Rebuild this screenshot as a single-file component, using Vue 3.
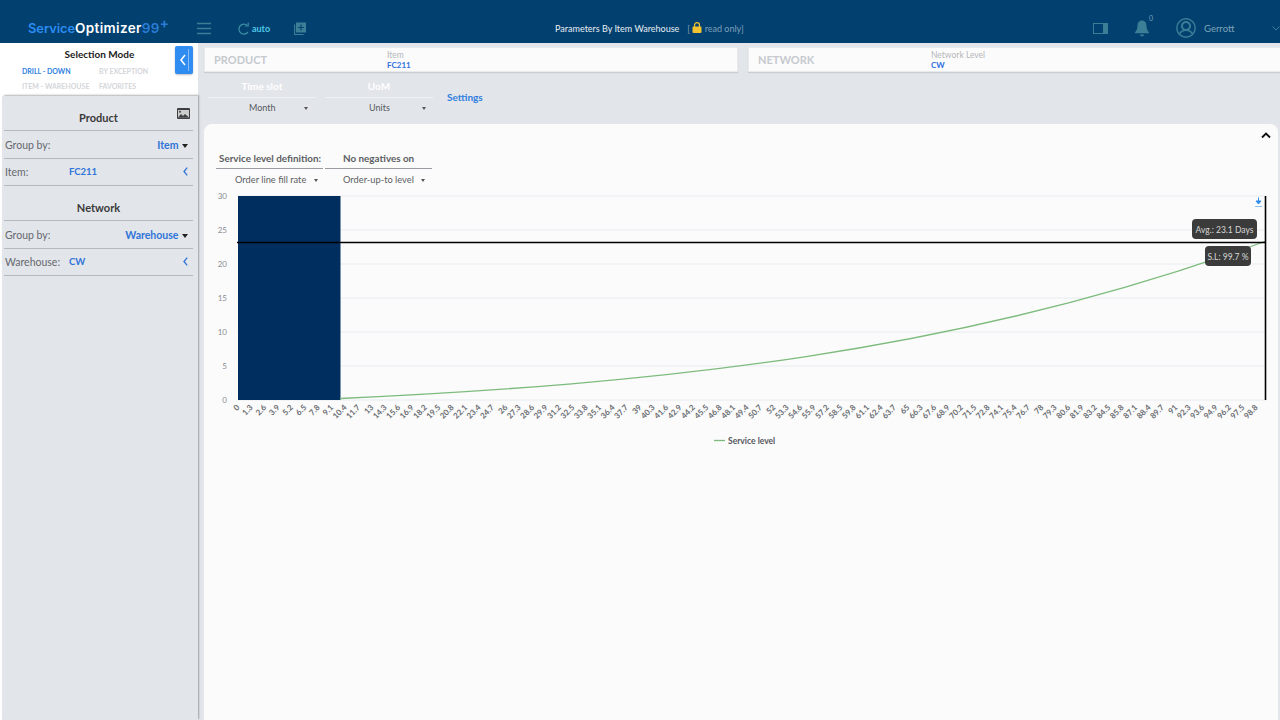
<script setup>
import { computed } from 'vue'

const yTicks = [30, 25, 20, 15, 10, 5, 0].map((v) => ({ v, y: 400 - v * 6.8 }))

// x axis runs 0 .. 98.8 in steps of 1.3
const xLabels = computed(() => {
  const list = []
  for (let i = 0; i <= 76; i++) {
    list.push({ text: String(Math.round(i * 13) / 10), x: 237 + i * 13.4 })
  }
  return list
})
</script>

<template>
  <div class="app">
    <header class="topbar">
      <div class="logo"><span class="logo-a">Service</span><span class="logo-b">Optimizer</span><span class="logo-a dim">99</span><sup class="logo-a dim">+</sup></div>
      <svg class="ico menu" width="14" height="13" viewBox="0 0 14 13"><path d="M0 1.500h14M0 6.500h14M0 11.500h14" stroke="#3b7f97" stroke-width="1.600" fill="none" /></svg>
      <svg class="ico refresh" width="12" height="13" viewBox="0 0 12 13"><path d="M10 10a5 5 0 1 1-.6-6.600" stroke="#3b8aa3" stroke-width="1.300" fill="none" /><path d="M10.200 0.600v3.400H7" stroke="#3b8aa3" stroke-width="1.200" fill="none" /></svg>
      <span class="auto">auto</span>
      <svg class="ico addbox" width="12" height="13" viewBox="0 0 12 13"><path d="M0.600 2.500v10h9" stroke="#3b7f97" stroke-width="1.100" fill="none" /><rect x="2" y="0.500" width="10" height="10" fill="#3b7f97" /><path d="M7 2.500v6M4 5.500h6" stroke="#0a4373" stroke-width="1.200" /></svg>
      <div class="title">
        <span>Parameters By Item Warehouse</span>
        <span class="ro">[
          <svg width="10" height="11" viewBox="0 0 10 11"><path d="M2.500 5V3.200a2.500 2.500 0 0 1 5 0V5" stroke="#f2c230" stroke-width="1.200" fill="none" /><rect x="0.500" y="4.500" width="9" height="6.500" rx="1" fill="#f2c230" /></svg>
          read only]</span>
      </div>
      <svg class="ico panel" width="15" height="11" viewBox="0 0 15 11"><rect x="0.500" y="0.500" width="14" height="10" stroke="#3b7f97" fill="none" /><rect x="10" y="0.500" width="4.500" height="10" fill="#3b7f97" /></svg>
      <div class="bell">
        <svg width="16" height="18" viewBox="0 0 16 18"><path d="M8 1.500c-3 0-4.500 2.400-4.500 5.200 0 3-.9 5-2.500 6.600v1h14v-1c-1.600-1.600-2.500-3.600-2.500-6.600C12.500 3.900 11 1.500 8 1.500z" fill="#3b7f97" /><path d="M6 15.500h4a2 2 0 0 1-4 0z" fill="#3b7f97" /></svg>
        <span class="badge">0</span>
      </div>
      <svg class="ico user" width="20" height="20" viewBox="0 0 20 20"><circle cx="10" cy="10" r="9.200" stroke="#3b7f97" stroke-width="1.400" fill="none" /><circle cx="10" cy="8" r="4" stroke="#3b7f97" stroke-width="2" fill="none" /><path d="M3.500 16c1.500-3 3.500-3.800 6.500-3.800s5 .8 6.500 3.800" stroke="#3b7f97" stroke-width="1.500" fill="none" /></svg>
      <span class="username">Gerrott</span>
      <svg class="ico chev" width="8" height="5" viewBox="0 0 8 5"><path d="M0.500 0.500L4 4l3.500-3.500" stroke="#3b7f97" fill="none" /></svg>
    </header>

    <div class="body">
      <aside class="side">
        <div class="mode">
          <div class="mode-text">
            <div class="mode-title">Selection Mode</div>
            <div class="mode-tabs">
              <span class="on">DRILL - DOWN</span>
              <span>BY EXCEPTION</span>
              <span>ITEM - WAREHOUSE</span>
              <span>FAVORITES</span>
            </div>
          </div>
          <button class="collapse"><svg width="12" height="24" viewBox="0 0 12 24"><path d="M7 7L3 12l4 5" stroke="#fff" stroke-width="1.500" fill="none" /><path d="M10.500 1v22" stroke="#9cc9f8" stroke-width=".8" /></svg></button>
        </div>
        <div class="filters">
          <div class="f-head">
            Product
            <svg class="pic" width="13" height="11" viewBox="0 0 13 11"><rect width="13" height="11" rx="1" fill="#3d3f43" /><rect x="1" y="2" width="11" height="7.500" fill="#ccc" /><path d="M1 9.500l3-3.500 2 2 2-2 4 3.500z" fill="#3d3f43" /><circle cx="3" cy="3.800" r="1" fill="#3d3f43" /></svg>
          </div>
          <div class="f-row grp"><label>Group by:</label><b class="right">Item <i class="tri"></i></b></div>
          <div class="f-row">
            <label>Item:</label><b class="val">FC211</b>
            <svg class="lt" width="5" height="9" viewBox="0 0 5 9"><path d="M4.200 .7L1 4.500l3.200 3.800" stroke="#2f74d8" stroke-width="1.300" fill="none" /></svg>
          </div>
          <div class="f-head">Network</div>
          <div class="f-row grp"><label>Group by:</label><b class="right">Warehouse <i class="tri"></i></b></div>
          <div class="f-row">
            <label>Warehouse:</label><b class="val">CW</b>
            <svg class="lt" width="5" height="9" viewBox="0 0 5 9"><path d="M4.200 .7L1 4.500l3.200 3.800" stroke="#2f74d8" stroke-width="1.300" fill="none" /></svg>
          </div>
        </div>
      </aside>

      <main class="main">
        <div class="cards">
          <div class="card-top product">
            <span class="c-name">PRODUCT</span>
            <div class="c-field"><small>Item</small><b>FC211</b></div>
          </div>
          <div class="card-top network">
            <span class="c-name">NETWORK</span>
            <div class="c-field"><small>Network Level</small><b>CW</b></div>
          </div>
        </div>

        <div class="controls">
          <div class="sel">
            <div class="sel-title">Time slot</div>
            <div class="sel-val"><span>Month</span><i class="tri small"></i></div>
          </div>
          <div class="sel">
            <div class="sel-title">UoM</div>
            <div class="sel-val"><span>Units</span><i class="tri small"></i></div>
          </div>
          <a class="settings">Settings</a>
        </div>

        <section class="panel-card">
          <svg class="up" width="10" height="7" viewBox="0 0 10 7"><path d="M1 5.500l4-4 4 4" stroke="#111" stroke-width="1.800" fill="none" /></svg>
          <div class="defs">
            <div class="def">
              <div class="def-title">Service level definition:</div>
              <div class="def-val">Order line fill rate <i class="tri small"></i></div>
            </div>
            <div class="def">
              <div class="def-title">No negatives on</div>
              <div class="def-val">Order-up-to level <i class="tri small"></i></div>
            </div>
          </div>

          <svg class="chart" width="1074" height="258" viewBox="204 190 1074 258">
            <g v-for="t in yTicks" :key="t.v">
              <line x1="237" :x2="1266" :y1="t.y" :y2="t.y" stroke="#e9ebf0" />
              <text x="227" :y="t.y + 3" class="ytick" text-anchor="end">{{ t.v }}</text>
            </g>
            <rect x="238" y="196" width="102.500" height="204" fill="#002f5f" />
            <path d="M340 398.500C649 384 957 355 1266 241" stroke="#7dbb7c" stroke-width="1.300" fill="none" />
            <line x1="237" x2="1266" y1="242.500" y2="242.500" stroke="#000" stroke-width="1.600" />
            <line x1="1265.500" x2="1265.500" y1="196" y2="400" stroke="#000" stroke-width="1.600" />
            <g v-for="l in xLabels" :key="l.x">
              <text class="xtick" text-anchor="end" :transform="`translate(${l.x + 3} 408) rotate(-45)`">{{ l.text }}</text>
            </g>
            <path d="M1258.500 197.500v5M1256 201l2.500 3 2.500-3z" stroke="#2f8cf0" fill="#2f8cf0" stroke-width="1" />
            <line x1="1255" x2="1262" y1="206.500" y2="206.500" stroke="#8fc0f3" />
            <rect x="1192" y="219" width="65" height="20" rx="4" fill="#3b3b3b" />
            <text x="1224.500" y="233" class="tip" text-anchor="middle">Avg.: 23.1 Days</text>
            <rect x="1205" y="246" width="46" height="20" rx="4" fill="#3b3b3b" />
            <text x="1228" y="260" class="tip" text-anchor="middle">S.L: 99.7 %</text>
            <line x1="714" x2="725" y1="440.500" y2="440.500" stroke="#7dbb7c" stroke-width="1.300" />
            <text x="728" y="444" class="legend">Service level</text>
          </svg>
        </section>
      </main>
    </div>
  </div>
</template>

<style>
html, body { margin: 0; }
</style>

<style scoped>
.app {
  width: 1280px;
  height: 720px;
  overflow: hidden;
  display: flex;
  flex-direction: column;
  background: #e2e5ea;
  font-family: Lato, "Open Sans", sans-serif;
}
.topbar {
  height: 43px;
  flex: none;
  display: flex;
  align-items: center;
  padding-top: 13px;
  box-sizing: border-box;
  background: #01406f;
  color: #fff;
}
.logo {
  margin-left: 28px;
  width: 167px;
  font-family: Inter, sans-serif;
  font-size: 12.800px;
  font-weight: 600;
  white-space: nowrap;
}
.logo sup { font-size: 10px; line-height: 0; font-weight: 700; }
.logo-a { color: #2a8cf2; }
.logo-a.dim { color: #2a7cd6; font-size: 13.500px; letter-spacing: .3px; }
.logo-b { color: #fff; font-size: 13.500px; letter-spacing: .35px; }
.ico { flex: none; }
.refresh { margin-left: 27px; }
.menu { margin-left: 2px; }
.auto { margin-left: 2px; color: #4fc8e8; font-size: 9px; font-weight: 700; }
.addbox { margin-left: 24px; }
.title {
  margin-left: 249px;
  width: 532px;
  font-size: 9px;
  color: #e9eef3;
  display: flex;
  gap: 8px;
  align-items: center;
  white-space: nowrap;
}
.ro { color: #7f9fb8; }
.ro svg { vertical-align: -1px; }
.panel { margin-left: 6px; }
.bell { position: relative; margin-left: 26px; display: flex; }
.badge { position: absolute; top: -5px; right: -3px; font-size: 7px; color: #7f9fb8; }
.user { margin-left: 26px; }
.username { margin-left: 8px; width: 68px; font-size: 9.500px; color: #7fa5b8; }
.chev { margin-left: 0; }

.body { flex: 1; display: flex; min-height: 0; }
.side { width: 198px; flex: none; display: flex; flex-direction: column; background: #fff; }
.mode { height: 53px; display: flex; flex: none; padding-top: 3px; box-sizing: border-box; }
.mode-text { width: 175px; flex: none; }
.mode-title {
  margin-top: 2px;
  padding-left: 24px;
  text-align: center;
  font-size: 10px;
  font-weight: 700;
  color: #1c1c1c;
}
.mode-tabs {
  margin-top: 7px;
  padding-left: 22px;
  display: grid;
  grid-template-columns: 77px 1fr;
  row-gap: 7px;
  font-size: 7px;
  font-weight: 700;
  color: #d4d6da;
  white-space: nowrap;
}
.mode-tabs .on { color: #2f7fe0; }
.collapse {
  width: 18px;
  height: 28px;
  padding: 0;
  border: 0;
  border-radius: 2px;
  background: #2f8cf0;
  display: flex;
  align-items: center;
  justify-content: center;
  box-shadow: 0 1px 2px rgba(0, 0, 0, .25);
}
.filters {
  flex: 1;
  margin-left: 2px;
  padding: 0 5px 0 2px;
  background: #e2e5ea;
  border-radius: 3px 0 0 0;
  box-shadow: 1px -1px 2px rgba(0, 0, 0, .3);
}
.f-head {
  position: relative;
  height: 34px;
  line-height: 44px;
  text-align: center;
  font-size: 11px;
  font-weight: 700;
  color: #3a3a3a;
  border-bottom: 1px solid #b5b8bd;
}
.pic { position: absolute; top: 12px; right: 3px; }
.f-row {
  height: 27.500px;
  box-sizing: border-box;
  display: flex;
  align-items: center;
  font-size: 10.500px;
  color: #65686d;
  border-bottom: 1px solid #b5b8bd;
  padding: 0 5px 0 1px;
}
.f-row.grp { padding-top: 2px; }
.f-row label { width: 64px; flex: none; }
.f-row b { color: #2f74d8; font-weight: 700; }
.f-row .right { margin-left: auto; }
.f-row .val { font-size: 9.500px; }
.lt { margin-left: auto; }
.tri {
  display: inline-block;
  width: 0;
  height: 0;
  margin-left: 1px;
  border-left: 3px solid transparent;
  border-right: 3px solid transparent;
  border-top: 4px solid #222;
  vertical-align: 1px;
}
.tri.small { border-left-width: 2px; border-right-width: 2px; border-top: 3px solid #555; }

.main { flex: 1; min-width: 0; display: flex; flex-direction: column; padding-left: 6px; }
.cards { display: flex; gap: 10px; margin-top: 4px; height: 25px; flex: none; }
.card-top {
  display: flex;
  align-items: center;
  background: #fbfbfc;
  border: 1px solid #e8eaee;
  box-shadow: 0 1px 1px rgba(0, 0, 0, .1);
  box-sizing: border-box;
}
.product { width: 534px; }
.network { flex: 1; margin-right: -4px; }
.c-name { width: 182px; padding-left: 9px; box-sizing: border-box; font-size: 11px; font-weight: 700; color: #c6c9ce; flex: none; }
.c-field { display: flex; flex-direction: column; line-height: 10px; margin-top: 1px; }
.c-field small { font-size: 8.500px; color: #b5b7ba; }
.c-field b { font-size: 8px; color: #2f6fdc; }

.controls { height: 52px; flex: none; display: flex; padding-left: 4px; box-sizing: border-box; gap: 9px; }
.sel { width: 108px; font-size: 9px; color: #55585d; }
.sel-title {
  height: 26px;
  line-height: 28px;
  text-align: center;
  font-size: 10px;
  font-weight: 700;
  color: #fff;
  border-bottom: 1px solid #f0f1f3;
  box-sizing: border-box;
}
.sel-val { display: flex; justify-content: space-between; align-items: center; height: 19px; padding: 0 8px 0 41px; }
.sel + .sel .sel-val { padding-left: 44px; padding-right: 7px; }
.sel i { margin-top: 1px; }
.settings { margin: 19px 0 0 5px; font-size: 10px; font-weight: 700; color: #2f7fe0; }

.panel-card {
  position: relative;
  flex: 1;
  width: 1074px;
  padding-top: 24px;
  background: #fbfbfb;
  border-radius: 8px 8px 0 0;
  box-sizing: border-box;
}
.up { position: absolute; top: 8px; right: 7px; }
.defs { display: flex; margin-left: 12px; gap: 2px; height: 42px; }
.def { width: 107px; font-size: 9.300px; color: #5b5e63; }
.def-title {
  height: 21px;
  line-height: 20px;
  font-size: 9.900px;
  font-weight: 700;
  padding-left: 3px;
  border-bottom: 1px solid #9a9ca1;
  box-sizing: border-box;
  white-space: nowrap;
}
.def + .def .def-title { padding-left: 18px; }
.def-val { height: 21px; line-height: 21px; padding-left: 19px; white-space: nowrap; }
.def + .def .def-val { padding-left: 18px; }
.def-val .tri { margin-left: 5px; }
.chart { display: block; }
.ytick { font-size: 8px; fill: #8a8c90; }
.xtick { font-size: 8px; fill: #6a6d72; font-weight: 700; }
.tip { font-size: 8.500px; fill: #d8d8d8; }
.legend { font-size: 8.500px; font-weight: 700; fill: #55585d; }
</style>
